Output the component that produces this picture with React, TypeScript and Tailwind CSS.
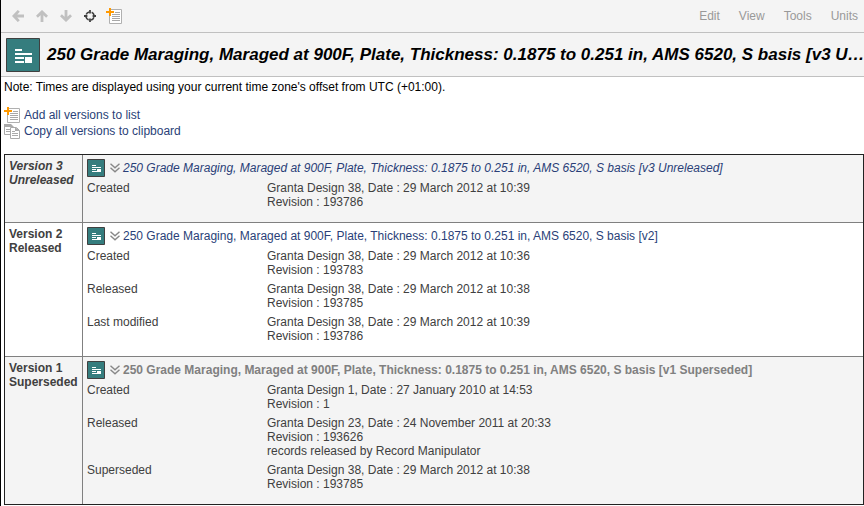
import type { ReactNode } from 'react';

interface Detail {
  label: string;
  lines: string[];
}

interface Version {
  name: string;
  status: string;
  title: string;
  rowClass: string;
  nameClass: string;
  titleClass: string;
  details: Detail[];
}

const RECORD = '250 Grade Maraging, Maraged at 900F, Plate, Thickness: 0.1875 to 0.251 in, AMS 6520, S basis';

const versions: Version[] = [
  {
    name: 'Version 3',
    status: 'Unreleased',
    title: `${RECORD} [v3 Unreleased]`,
    rowClass: 'bg-[#f4f4f4]',
    nameClass: 'italic',
    titleClass: 'italic text-[#2a3f78]',
    details: [
      { label: 'Created', lines: ['Granta Design 38, Date : 29 March 2012 at 10:39', 'Revision : 193786'] },
    ],
  },
  {
    name: 'Version 2',
    status: 'Released',
    title: `${RECORD} [v2]`,
    rowClass: 'bg-white',
    nameClass: '',
    titleClass: 'text-[#2a3f78]',
    details: [
      { label: 'Created', lines: ['Granta Design 38, Date : 29 March 2012 at 10:36', 'Revision : 193783'] },
      { label: 'Released', lines: ['Granta Design 38, Date : 29 March 2012 at 10:38', 'Revision : 193785'] },
      { label: 'Last modified', lines: ['Granta Design 38, Date : 29 March 2012 at 10:39', 'Revision : 193786'] },
    ],
  },
  {
    name: 'Version 1',
    status: 'Superseded',
    title: `${RECORD} [v1 Superseded]`,
    rowClass: 'bg-[#f4f4f4]',
    nameClass: '',
    titleClass: 'font-bold text-[#808080]',
    details: [
      { label: 'Created', lines: ['Granta Design 1, Date : 27 January 2010 at 14:53', 'Revision : 1'] },
      {
        label: 'Released',
        lines: [
          'Granta Design 23, Date : 24 November 2011 at 20:33',
          'Revision : 193626',
          'records released by Record Manipulator',
        ],
      },
      { label: 'Superseded', lines: ['Granta Design 38, Date : 29 March 2012 at 10:38', 'Revision : 193785'] },
    ],
  },
];

function ArrowIcon({ className = '' }: { className?: string }) {
  return (
    <svg className={className} width="12" height="12" viewBox="0 0 12 12" fill="none" stroke="#c0c0c0" strokeWidth="2.8">
      <path d="M6.8 0.9 1.9 6l4.9 5.1M2 6h10" />
    </svg>
  );
}

function TargetIcon() {
  return (
    <svg width="12" height="12" viewBox="0 0 12 12" fill="none" stroke="#404040">
      <circle cx="6" cy="6" r="4.1" strokeWidth="1.6" strokeDasharray="4 2.44" strokeDashoffset="-1.22" />
      <path d="M6 0v3.4M6 8.6V12M0 6h3.4M8.6 6H12" strokeWidth="1.8" />
    </svg>
  );
}

function AddListIcon() {
  return (
    <svg width="16" height="16" viewBox="0 0 16 16" className="shrink-0">
      <path d="M3.5 1.5h12v14h-12z" fill="#fff" stroke="#b0b0b0" />
      <path d="M9 4.5h5M6 6.5h8M6 8.5h8M6 10.5h8M6 12.5h8" stroke="#a8a8a8" />
      <path d="M3 0h2v3h3v2H5v3H3V5H0V3h3z" fill="#ff9900" />
    </svg>
  );
}

function CopyIcon() {
  return (
    <svg width="16" height="16" viewBox="0 0 16 16" className="shrink-0">
      <path d="M.5 1.5h6l3 3v7h-9z" fill="#fff" stroke="#aaa" />
      <path d="M0 1h7l3 3H0z" fill="#aaa" />
      <path d="M2 6.5h4M2 8.5h4" stroke="#aaa" />
      <path d="M6.5 4.5h6l3 3v8h-9z" fill="#fff" stroke="#aaa" />
      <path d="M11 4v4h5z" fill="#aaa" />
      <path d="M8 8.5h3M8 10.5h6M8 12.5h6" stroke="#aaa" />
    </svg>
  );
}

function RecordIcon() {
  return (
    <svg width="34" height="34" viewBox="0 0 34 34" className="shrink-0">
      <path d="M.5.5h33v33H.5z" fill="#357d7e" stroke="#404040" />
      <path d="M9 11h7v2H9zM9 15h17v2H9zM9 19h9v2H9zM9 23h9v2H9zM19 19h7v6h-7z" fill="#fff" />
    </svg>
  );
}

function SmallRecordIcon() {
  return (
    <svg width="18" height="18" viewBox="0 0 18 18" className="shrink-0">
      <path d="M.5.5h17v17H.5z" fill="#357d7e" stroke="#404040" />
      <path d="M5 6h4v1H5zM5 8h9v1H5zM5 10h4v1H5zM5 12h9v1H5zM10 10h4v3h-4z" fill="#fff" />
    </svg>
  );
}

function ExpandIcon() {
  return (
    <svg width="10" height="10" viewBox="0 0 10 10" fill="none" stroke="#888" strokeWidth="1.4">
      <path d="M.5.8 5 4.8 9.5.8M.5 4.8 5 8.8 9.5 4.8" />
    </svg>
  );
}

function ToolButton({ label, children }: { label: string; children: ReactNode }) {
  return (
    <button aria-label={label} className="flex size-6 items-center justify-center">
      {children}
    </button>
  );
}

export default function App() {
  return (
    <div className="min-h-screen border-l border-black bg-white font-['Liberation_Sans',Arial,sans-serif] text-xs leading-[14px] text-[#404040]">
      <header className="bg-[#f4f4f4]">
        <div className="flex h-[33px] items-center justify-between border-b border-[#c0c0c0] pr-1.5 pl-[5px]">
          <div className="flex">
            <ToolButton label="Back"><ArrowIcon /></ToolButton>
            <ToolButton label="Up"><ArrowIcon className="rotate-90" /></ToolButton>
            <ToolButton label="Down"><ArrowIcon className="-rotate-90" /></ToolButton>
            <ToolButton label="Locate"><TargetIcon /></ToolButton>
            <ToolButton label="Add to list"><AddListIcon /></ToolButton>
          </div>
          <nav className="flex gap-[19px] text-[#999]">
            <button>Edit</button>
            <button>View</button>
            <button>Tools</button>
            <button>Units</button>
          </nav>
        </div>
        <div className="flex h-11 items-center gap-[7px] border-b border-[#c0c0c0] pl-[5px]">
          <RecordIcon />
          <h1
            title={`${RECORD} [v3 Unreleased]`}
            className="whitespace-nowrap text-[17px] leading-6 font-bold text-black italic"
          >
            {RECORD} [v3 U…
          </h1>
        </div>
      </header>

      <main className="pt-[3px] pl-[3px]">
        <p className="text-black">Note: Times are displayed using your current time zone's offset from UTC (+01:00).</p>

        <div className="mt-[13px] mb-[15px] flex flex-col items-start text-[#2a3f78]">
          <a href="#add" className="flex h-4 items-center gap-1">
            <AddListIcon />
            Add all versions to list
          </a>
          <a href="#copy" className="flex h-4 items-center gap-1">
            <CopyIcon />
            Copy all versions to clipboard
          </a>
        </div>

        <table className="w-full border-separate border-spacing-0 border border-[#222]">
          <tbody>
            {versions.map((version) => (
              <tr key={version.name} className={`group ${version.rowClass}`}>
                <th
                  scope="row"
                  className={`w-[78px] border-r border-b border-[#808080] p-1 text-left align-top group-last:border-b-0 ${version.nameClass}`}
                >
                  {version.name}
                  <br />
                  {version.status}
                </th>
                <td className="border-b border-[#808080] px-1 pt-1 pb-[13px] align-top group-last:border-b-0">
                  <div className="mb-1 flex items-center">
                    <SmallRecordIcon />
                    <button aria-label={`Expand ${version.name}`} className="mr-[3px] ml-[5px]"><ExpandIcon /></button>
                    <a href="#record" className={version.titleClass}>{version.title}</a>
                  </div>
                  <dl className="flex flex-col gap-[5px]">
                    {version.details.map((detail) => (
                      <div key={detail.label} className="flex">
                        <dt className="w-[180px] shrink-0">{detail.label}</dt>
                        <dd>
                          {detail.lines.map((line) => (
                            <div key={line}>{line}</div>
                          ))}
                        </dd>
                      </div>
                    ))}
                  </dl>
                </td>
              </tr>
            ))}
          </tbody>
        </table>
      </main>
    </div>
  );
}
